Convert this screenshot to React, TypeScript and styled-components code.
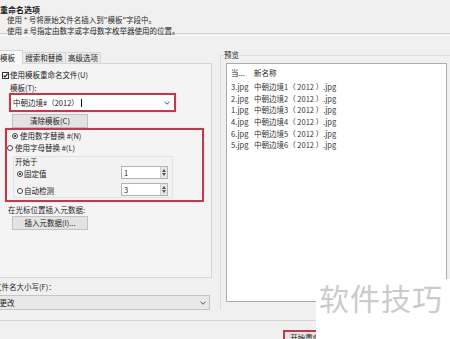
import React from "react";
import styled, { createGlobalStyle } from "styled-components";

const Global = createGlobalStyle`
  html, body { margin: 0; padding: 0; background: #f0f0f0; }
  body { width: 450px; height: 339px; overflow: hidden; }
  * { box-sizing: border-box; }
`;

const Page = styled.div`
  position: relative;
  width: 450px;
  height: 339px;
  overflow: hidden;
  background: #f0f0f0;
  color: #1c1c1c;
  font-family: "Noto Sans CJK SC", "Noto Sans", sans-serif;
  font-size: 7.5px;
  line-height: 10px;
`;

const Header = styled.div`
  height: 33px;
  padding-top: 5px;
`;

const Title = styled.div`
  font-weight: 700;
  font-size: 8px;
  line-height: 10px;
  height: 10px;
`;

const Hint = styled.div<{ $gap: number }>`
  padding-left: 7px;
  line-height: 10px;
  height: 10px;
  margin-top: ${(p) => p.$gap}px;
  color: #2a2a2a;
`;

const Separator = styled.div`
  height: 3px;
  border-top: 1px solid #d4d4d4;
  border-bottom: 1px solid #fcfcfc;
`;

const Main = styled.div`
  height: 284px;
  display: flex;
`;

const LeftCol = styled.div`
  width: 215px;
  margin-left: -2px;
  padding-top: 14px;
  display: flex;
  flex-direction: column;
`;

const TabStrip = styled.div`
  display: flex;
  height: 13px;
  align-items: flex-start;
`;

const Tab = styled.div<{ $active?: boolean; $w: number }>`
  position: relative;
  z-index: ${(p) => (p.$active ? 1 : 0)};
  width: ${(p) => p.$w}px;
  height: ${(p) => (p.$active ? 14 : 11)}px;
  margin-top: ${(p) => (p.$active ? 0 : 2)}px;
  background: ${(p) => (p.$active ? "#f8f8f8" : "#ececec")};
  border: 1px solid #d6d6d6;
  border-bottom: none;
  border-left: ${(p) => (p.$active ? "1px solid #d6d6d6" : "none")};
  display: flex;
  align-items: center;
  justify-content: ${(p) => (p.$active ? "flex-start" : "center")};
  padding-left: ${(p) => (p.$active ? 1 : 0)}px;
  line-height: 10px;
`;

const TabPanel = styled.div`
  width: 214px;
  height: 215px;
  background: #f4f4f4;
  border: 1px solid #d6d6d6;
  display: flex;
  flex-direction: column;
  align-items: flex-start;
`;

const CheckRow = styled.div`
  display: flex;
  align-items: center;
  height: 10px;
  margin-top: 6px;
  margin-left: 3px;
  gap: 1px;
`;

const CheckBox = styled.span`
  width: 7px;
  height: 7px;
  border: 1px solid #333;
  background: #fff;
  display: inline-flex;
  align-items: center;
  justify-content: center;
`;

const Label = styled.div<{ $ml: number; $mt: number }>`
  height: 10px;
  line-height: 10px;
  margin-left: ${(p) => p.$ml}px;
  margin-top: ${(p) => p.$mt}px;
  white-space: nowrap;
`;

const RedFrame = styled.div<{ $ml: number; $w: number; $h: number; $mt: number }>`
  margin-left: ${(p) => p.$ml}px;
  margin-top: ${(p) => p.$mt}px;
  width: ${(p) => p.$w}px;
  height: ${(p) => p.$h}px;
  border: 2px solid #bf3a4e;
  box-shadow: 0 0 1px rgba(191, 58, 78, 0.4);
`;

const Combo = styled.div`
  height: 100%;
  background: #fff;
  display: flex;
  align-items: center;
  justify-content: space-between;
  padding: 0 4px 0 2px;
`;

const Caret = styled.span`
  display: inline-block;
  width: 1px;
  height: 8px;
  background: #111;
  margin-left: 2px;
  vertical-align: middle;
`;

const Button = styled.div<{ $ml: number; $mt: number }>`
  margin-left: ${(p) => p.$ml}px;
  margin-top: ${(p) => p.$mt}px;
  width: 76px;
  height: 14px;
  background: #e3e3e3;
  border: 1px solid #c2c2c2;
  display: flex;
  align-items: center;
  justify-content: center;
  line-height: 10px;
`;

const FrameInner = styled.div`
  display: flex;
  flex-direction: column;
  align-items: flex-start;
  padding-top: 1px;
`;

const RadioRow = styled.div<{ $ml: number; $mt: number }>`
  display: flex;
  align-items: center;
  height: 10px;
  margin-left: ${(p) => p.$ml}px;
  margin-top: ${(p) => p.$mt}px;
  gap: 2px;
  white-space: nowrap;
`;

const Radio = styled.span<{ $on?: boolean }>`
  width: 6px;
  height: 6px;
  border-radius: 50%;
  border: 1px solid #444;
  background: #fff;
  display: inline-flex;
  align-items: center;
  justify-content: center;
  &::after {
    content: "";
    width: 2px;
    height: 2px;
    border-radius: 50%;
    background: ${(p) => (p.$on ? "#111" : "transparent")};
  }
`;

const Group = styled.div`
  margin-left: 6px;
  margin-top: 3px;
  width: 160px;
  height: 42px;
  border: 1px solid #e2e2e2;
  background: #f2f2f2;
  display: flex;
  flex-direction: column;
`;

const GroupLabel = styled.div`
  height: 9px;
  line-height: 9px;
  margin-left: 1px;
`;

const SpinRow = styled.div<{ $mt: number }>`
  display: flex;
  align-items: center;
  height: 13px;
  margin-top: ${(p) => p.$mt}px;
  padding-left: 3px;
  padding-right: 4px;
`;

const RadioLabel = styled.div`
  display: flex;
  align-items: center;
  gap: 1px;
  margin-top: 2px;
`;

const Spin = styled.div`
  margin-left: auto;
  width: 47px;
  height: 13px;
  background: #fff;
  border: 1px solid #b4b4b4;
  display: flex;
  align-items: center;
  justify-content: space-between;
  padding-left: 2px;
`;

const SpinArrows = styled.div`
  width: 7px;
  height: 11px;
  background: #e6e6e6;
  border-left: 1px solid #cfcfcf;
  display: flex;
  flex-direction: column;
  align-items: center;
  justify-content: space-around;
  padding: 1px 0;
`;

const CaseLabel = styled.div`
  margin-top: 4px;
  height: 10px;
  line-height: 10px;
  margin-left: -4px;
  white-space: nowrap;
`;

const Select = styled.div`
  margin-top: 3px;
  width: 215px;
  height: 15px;
  background: #e8e8e8;
  border: 1px solid #c4c4c4;
  display: flex;
  align-items: center;
  justify-content: space-between;
  padding: 0 3px 0 0;
  margin-left: -3px;
`;

const SelectValue = styled.span`
  margin-left: -4px;
`;

const Preview = styled.fieldset`
  margin: 14px 0 10px 8px;
  padding: 3px 0 0 5px;
  width: 240px;
  border: 1px solid #dcdcdc;
  border-right: none;
  border-bottom: none;
  align-self: stretch;
  min-width: 0;
`;

const Legend = styled.legend`
  padding: 0;
  margin-left: -2px;
  line-height: 10px;
  height: 10px;
  font-size: 7.5px;
`;

const ListBox = styled.div`
  width: 221px;
  height: 239px;
  background: #fff;
  border: 1px solid #ababab;
  padding: 4px 0 0 4px;
  color: #333;
  font-size: 7.5px;
`;

const ListHeader = styled.div`
  display: flex;
  height: 10px;
  line-height: 10px;
  color: #222;
`;

const Rows = styled.div`
  margin-top: 3px;
`;

const Row = styled.div`
  display: flex;
  height: 11.7px;
  line-height: 11.7px;
  white-space: pre;
`;

const ColA = styled.div`
  width: 23px;
`;

const Footer = styled.div`
  height: 19px;
  border-top: 1px solid #d6d6d6;
  padding-top: 9px;
  padding-left: 283px;
`;

const StartButton = styled.div`
  width: 62px;
  height: 16px;
  border: 2px solid #bf3a4e;
  background: #e3e3e3;
  display: flex;
  align-items: center;
  justify-content: center;
  line-height: 10px;
`;

const Watermark = styled.div`
  position: absolute;
  left: 316px;
  top: 279px;
  right: 0;
  bottom: 0;
  background: #ffffff;
  color: #cbcbcb;
  font-size: 30px;
  line-height: 30px;
  padding: 3px 0 0 3px;
  letter-spacing: 1px;
  white-space: nowrap;
`;

const Chevron = () => (
  <svg width="6" height="4" viewBox="0 0 6 4">
    <path d="M0.5 0.8 L3 3.2 L5.5 0.8" fill="none" stroke="#555" strokeWidth="1" />
  </svg>
);

const Tri = ({ up }: { up?: boolean }) => (
  <svg width="4" height="3" viewBox="0 0 4 3">
    <path d={up ? "M0 3 L2 0 L4 3 Z" : "M0 0 L2 3 L4 0 Z"} fill="#555" />
  </svg>
);

const rows = [
  ["3.jpg", "中朝边境1（ 2012 ）.jpg"],
  ["2.jpg", "中朝边境2（ 2012 ）.jpg"],
  ["1.jpg", "中朝边境3（ 2012 ）.jpg"],
  ["4.jpg", "中朝边境4（ 2012 ）.jpg"],
  ["6.jpg", "中朝边境5（ 2012 ）.jpg"],
  ["5.jpg", "中朝边境6（ 2012 ）.jpg"],
];

export default function App() {
  return (
    <Page>
      <Global />
      <Header>
        <Title>重命名选项</Title>
        <Hint $gap={0}>使用 * 号将原始文件名插入到"模板"字段中。</Hint>
        <Hint $gap={1}>使用 # 号指定由数字或字母数字枚举器使用的位置。</Hint>
      </Header>
      <Separator />
      <Main>
        <LeftCol>
          <TabStrip>
            <Tab $active $w={25}>模板</Tab>
            <Tab $w={43}>搜索和替换</Tab>
            <Tab $w={35}>高级选项</Tab>
          </TabStrip>
          <TabPanel>
            <CheckRow>
              <CheckBox>
                <svg width="5" height="5" viewBox="0 0 5 5">
                  <path d="M0.5 2.5 L2 4 L4.6 0.6" fill="none" stroke="#111" strokeWidth="1.1" />
                </svg>
              </CheckBox>
              <span>使用模板重命名文件(U)</span>
            </CheckRow>
            <Label $ml={11} $mt={3}>模板(T):</Label>
            <RedFrame $ml={10} $mt={0} $w={167} $h={19}>
              <Combo>
                <span>
                  中朝边境#（2012）
                  <Caret />
                </span>
                <Chevron />
              </Combo>
            </RedFrame>
            <Button $ml={13} $mt={2}>清除模板(C)</Button>
            <RedFrame $ml={6} $mt={0} $w={199} $h={74}>
              <FrameInner>
                <RadioRow $ml={5} $mt={0}>
                  <Radio $on />
                  <span>使用数字替换 #(N)</span>
                </RadioRow>
                <RadioRow $ml={0} $mt={2}>
                  <Radio />
                  <span>使用字母替换 #(L)</span>
                </RadioRow>
                <Group>
                  <GroupLabel>开始于</GroupLabel>
                  <SpinRow $mt={0}>
                    <RadioLabel>
                      <Radio $on />
                      <span>固定值</span>
                    </RadioLabel>
                    <Spin>
                      <span>1</span>
                      <SpinArrows>
                        <Tri up />
                        <Tri />
                      </SpinArrows>
                    </Spin>
                  </SpinRow>
                  <SpinRow $mt={4}>
                    <RadioLabel>
                      <Radio />
                      <span>自动检测</span>
                    </RadioLabel>
                    <Spin>
                      <span>3</span>
                      <SpinArrows>
                        <Tri up />
                        <Tri />
                      </SpinArrows>
                    </Spin>
                  </SpinRow>
                </Group>
              </FrameInner>
            </RedFrame>
            <Label $ml={9} $mt={3}>在光标位置插入元数据:</Label>
            <Button $ml={13} $mt={1}>插入元数据(I)...</Button>
          </TabPanel>
          <CaseLabel>文件名大小写(F)：</CaseLabel>
          <Select>
            <SelectValue>不更改</SelectValue>
            <Chevron />
          </Select>
        </LeftCol>
        <Preview>
          <Legend>预览</Legend>
          <ListBox>
            <ListHeader>
              <ColA>当...</ColA>
              <div>新名称</div>
            </ListHeader>
            <Rows>
              {rows.map(([a, b]) => (
                <Row key={a}>
                  <ColA>{a}</ColA>
                  <div>{b}</div>
                </Row>
              ))}
            </Rows>
          </ListBox>
        </Preview>
      </Main>
      <Footer>
        <StartButton>开始重命名(R)</StartButton>
      </Footer>
      <Watermark>软件技巧</Watermark>
    </Page>
  );
}
